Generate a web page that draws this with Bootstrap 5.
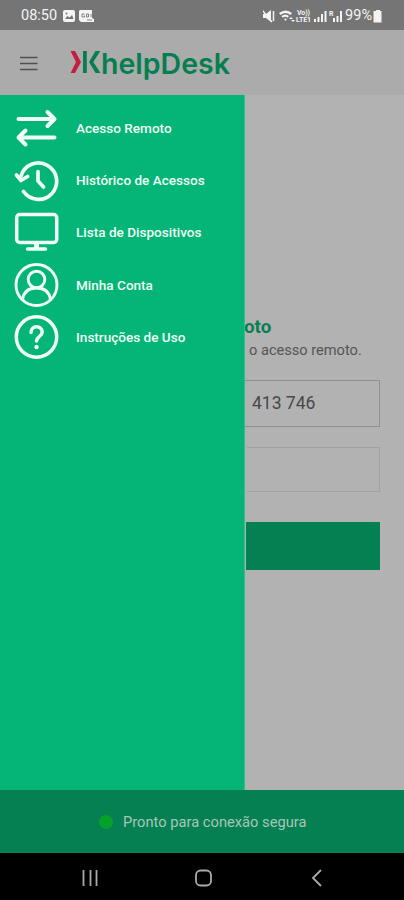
<!DOCTYPE html>
<html lang="pt-BR">
<head>
<meta charset="utf-8">
<meta name="viewport" content="width=device-width, initial-scale=1">
<title>KhelpDesk</title>
<link href="https://cdn.jsdelivr.net/npm/bootstrap@5.3.0/dist/css/bootstrap.min.css" rel="stylesheet">
<style>
body{font-family:Roboto,"Liberation Sans",sans-serif;background:#b2b2b2;height:900px;overflow:hidden}
svg{display:block;flex:none}
.statusbar{height:30px;background:#757575;color:#f4f4f4;font-size:14.5px;line-height:30px;padding:1px 21px 0 21px}
.battery-level{margin:0 1px 0 -1px}
.topbar{height:65px;background:#ababab}
.stage{height:695px}
.drawer{width:245px;background:#05b577;padding-top:7px;border-right:1px solid #35bd8c}
.drawer a{height:52.2px;padding-left:13px;color:#effff6;font-size:13.55px;font-weight:500;text-decoration:none}
.drawer a span{margin-left:17px;white-space:nowrap}
.pane{width:159px;padding-right:24px;overflow:hidden}
.pane h1{margin:220px 0 0 -1px;font-size:18.8px;line-height:24px;font-weight:700;color:#087f52}
.pane p{margin:0 0 0 4px;font-size:14.6px;line-height:22px;color:#555;white-space:nowrap}
.code-box{height:47px;margin-top:19px;border:1px solid #8f8f8f;border-left:0;color:#484848;font-size:17.5px;line-height:45px;padding-left:7px}
.entry-box{height:45px;margin-top:20px;border:1px solid #a1a1a1;border-left:0;margin-left:2px}
.action{height:48px;margin:30px 0 0 1px;background:#048052}
.ready{height:63px;background:#048052;color:#a7c7b5;font-size:14.7px;padding-left:99px;gap:10px}
.ready span:last-child{padding-top:1px}
.dot{width:14px;height:14px;background:#05a12b}
.keys{height:47px;background:#000}
</style>
<script src="https://cdn.jsdelivr.net/npm/bootstrap@5.3.0/dist/js/bootstrap.bundle.min.js"></script>
</head>
<body class="d-flex flex-column">
<div class="statusbar d-flex align-items-center">
  <span>08:50</span>
  <svg class="ms-1" width="34" height="14" viewBox="0 0 34 14"><rect x="2" y="1" width="12" height="12" rx="2" fill="#f4f4f4"/><path d="M4 10l2.500-3 2 1.500L11 6l1.500 4z" fill="#757575"/><circle cx="5.500" cy="4.500" r="1" fill="#757575"/><path d="M19 1h12v8l2 1v3H20l-2-2V2z" fill="#f4f4f4"/><path d="M23.500 5H21v3h2.500V6.500M25.500 5v3h2V5zM30 5v3M26 11h5" fill="none" stroke="#757575" stroke-width=".9"/></svg>
  <svg class="ms-auto" width="83" height="16" viewBox="2 0 83 16"><g fill="#f4f4f4"><path d="M2 6h3l5-4v12l-5-4H2z"/><path d="M18 5q7-5 13 0l-1.500 2q-5-4-10 0zM20.500 8q4-3 7.500 0l-1.300 1.700q-2.500-2-5 0zM23 11q1.500-1 3 0l-1.500 2z"/><path d="M28 11l2-2 2 2zM30 12l2 2 2-2z"/><path d="M53 14v-3h2v3zM56.500 14V9h2v5zM60 14V6h2v8zM63.500 14V3h2v11z"/><path d="M72 14v-4h2v4zM75.500 14V8h2v6zM79 14V3h2v11z"/></g><path d="M1 2l10 12M12.500 3v10" stroke="#f4f4f4" stroke-width="1.500" fill="none"/><text x="36" y="7" font-size="7" font-weight="700" fill="#f4f4f4" textLength="13">Vo))</text><text x="35" y="14" font-size="7" font-weight="700" fill="#f4f4f4" textLength="15">LTE1</text><text x="68" y="8" font-size="7" font-weight="700" fill="#f4f4f4">R</text></svg>
  <span class="battery-level">99%</span>
  <svg width="10" height="14" viewBox="0 0 10 14"><path d="M3 1h4v1h1.500v11.500h-8V2H3z" fill="#f4f4f4"/></svg>
</div>
<header class="topbar d-flex align-items-center">
  <svg width="240" height="65" viewBox="0 0 240 65"><path d="M20 27.500h17.500M20 33.500h17.500M20 39.500h17.500" stroke="#505050" stroke-width="1.700"/><path d="M70.500 21h4.500l6 11-6 11h-4.500l5.500-11z" fill="#c51c40"/><path d="M83 21h3.800v22H83zM95.500 21h4.800L93.300 32l7.200 11h-4.900L89 32z" fill="#057e50"/><text x="101" y="43.500" font-family="Inter,sans-serif" font-size="29" font-weight="600" fill="#057e50" textLength="129" lengthAdjust="spacingAndGlyphs">helpDesk</text></svg>
</header>
<main class="stage d-flex">
  <nav class="drawer d-flex flex-column flex-shrink-0">
    <a href="#" class="d-flex align-items-center"><svg width="46" height="46" viewBox="0 0 46 46" fill="none" stroke="#effff6" stroke-width="4" stroke-linecap="round" stroke-linejoin="round"><path d="M5.500 14H41M34.500 7l7 7-7 7M41.500 32.500H6M12.500 25.500l-7 7 7 7"/></svg><span>Acesso Remoto</span></a>
    <a href="#" class="d-flex align-items-center"><svg width="46" height="46" viewBox="0 0 46 46" fill="none" stroke="#effff6" stroke-width="3.700" stroke-linecap="round" stroke-linejoin="round"><path d="M8 19A18.200 18.200 0 1 1 10.500 34.500M3.500 18L8 23.500l6.500-4M25 14.500v9.500l5.500 6"/></svg><span>Histórico de Acessos</span></a>
    <a href="#" class="d-flex align-items-center"><svg width="46" height="46" viewBox="0 0 46 46" fill="none" stroke="#effff6" stroke-width="3.500" stroke-linecap="round" stroke-linejoin="round"><rect x="3.700" y="5.500" width="40" height="28" rx="3"/><path d="M23.500 34v6" stroke-width="5" stroke-linecap="butt"/><path d="M14.500 40h18"/></svg><span>Lista de Dispositivos</span></a>
    <a href="#" class="d-flex align-items-center"><svg width="46" height="46" viewBox="0 0 46 46" fill="none" stroke="#effff6" stroke-width="2.900"><circle cx="23.500" cy="23" r="20.500"/><circle cx="23.500" cy="17.500" r="8.300"/><path d="M9.500 38C10.500 29.500 15.500 26 23.500 26S36.500 29.500 37.500 38"/></svg><span>Minha Conta</span></a>
    <a href="#" class="d-flex align-items-center"><svg width="46" height="46" viewBox="0 0 46 46" fill="none" stroke="#effff6" stroke-width="3.500" stroke-linecap="round"><circle cx="23.500" cy="23" r="20.200"/><path d="M18 18.500c0-7.500 11.200-7.500 11.200-.5 0 4.500-5.700 4.500-5.700 9"/><circle cx="23.500" cy="33" r="2.200" fill="#effff6" stroke="none"/></svg><span>Instruções de Uso</span></a>
  </nav>
  <section class="pane">
    <h1>oto</h1>
    <p>o acesso remoto.</p>
    <div class="code-box">413 746</div>
    <div class="entry-box"></div>
    <div class="action"></div>
  </section>
</main>
<div class="ready d-flex align-items-center"><span class="dot rounded-circle"></span><span>Pronto para conexão segura</span></div>
<footer class="keys"><svg width="404" height="47" viewBox="0 0 404 47" fill="none" stroke="#aaa" stroke-width="1.800"><path d="M83.500 17v16M90.500 17v16M96.500 17v16M321 17l-8 8 8 8"/><rect x="196" y="17.500" width="15" height="15" rx="4.500"/></svg></footer>
</body>
</html>
